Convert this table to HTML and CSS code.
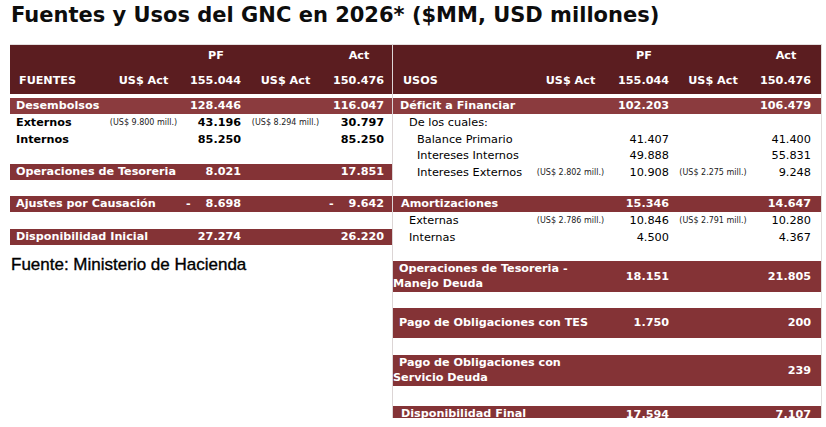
FILE: index.html
```html
<!DOCTYPE html>
<html lang="es">
<head>
<meta charset="utf-8">
<title>Fuentes y Usos del GNC en 2026</title>
<link rel="stylesheet" href="styles.css">
</head>
<body>
<h1 class="title">Fuentes y Usos del GNC en 2026* ($MM, USD millones)</h1>
<div class="tables">
  <div class="left">
    <div class="tbl tbl-l">
      <div class="head">
        <div class="row h22">
          <span></span><span></span><span class="hv"><span class="hc">PF</span></span><span></span><span class="hv"><span class="hc">Act</span></span>
        </div>
        <div class="row h27">
          <span class="pl3">FUENTES</span><span class="c">US$ Act</span><span class="r">155.044</span><span class="c">US$ Act</span><span class="r">150.476</span>
        </div>
      </div>
      <div class="gap4"></div>
      <div class="row bar hi">
        <span class="span2">Desembolsos</span><span class="r">128.446</span><span></span><span class="r">116.047</span>
      </div>
      <div class="row b h175">
        <span>Externos</span><span class="sm">(US$ 9.800 mill.)</span><span class="r">43.196</span><span class="sm">(US$ 8.294 mill.)</span><span class="r">30.797</span>
      </div>
      <div class="row b h17">
        <span>Internos</span><span></span><span class="r">85.250</span><span></span><span class="r">85.250</span>
      </div>
      <div class="sp155"></div>
      <div class="row bar">
        <span class="span2">Operaciones de Tesoreria</span><span class="r">8.021</span><span></span><span class="r">17.851</span>
      </div>
      <div class="sp16"></div>
      <div class="row bar">
        <span class="span2">Ajustes por Causación</span><span class="neg"><span>-</span><span>8.698</span></span><span></span><span class="neg neg5"><span>-</span><span>9.642</span></span>
      </div>
      <div class="sp17"></div>
      <div class="row bar">
        <span class="span2">Disponibilidad Inicial</span><span class="r">27.274</span><span></span><span class="r">26.220</span>
      </div>
    </div>
    <p class="fuente">Fuente: Ministerio de Hacienda</p>
  </div>
  <div class="divider"></div>
  <div class="right">
    <div class="tbl tbl-r">
      <div class="head">
        <div class="row h22">
          <span></span><span></span><span class="hv"><span class="hc">PF</span></span><span></span><span class="hv"><span class="hc">Act</span></span>
        </div>
        <div class="row h27">
          <span class="pl10">USOS</span><span class="c">US$ Act</span><span class="r">155.044</span><span class="c">US$ Act</span><span class="r">150.476</span>
        </div>
      </div>
      <div class="gap4"></div>
      <div class="row bar hi">
        <span class="span2 pl7">Déficit a Financiar</span><span class="r">102.203</span><span></span><span class="r">106.479</span>
      </div>
      <div class="row n h175">
        <span class="span2 pl16">De los cuales:</span><span></span><span></span><span></span>
      </div>
      <div class="row n h165">
        <span class="span2 pl24">Balance Primario</span><span class="r">41.407</span><span></span><span class="r">41.400</span>
      </div>
      <div class="row n h165">
        <span class="span2 pl24">Intereses Internos</span><span class="r">49.888</span><span></span><span class="r">55.831</span>
      </div>
      <div class="row n h16">
        <span class="pl24">Intereses Externos</span><span class="sm">(US$ 2.802 mill.)</span><span class="r">10.908</span><span class="sm">(US$ 2.275 mill.)</span><span class="r">9.248</span>
      </div>
      <div class="sp155"></div>
      <div class="row bar">
        <span class="span2 pl8">Amortizaciones</span><span class="r">15.346</span><span></span><span class="r">14.647</span>
      </div>
      <div class="row n h175">
        <span class="pl16">Externas</span><span class="sm">(US$ 2.786 mill.)</span><span class="r">10.846</span><span class="sm">(US$ 2.791 mill.)</span><span class="r">10.280</span>
      </div>
      <div class="row n h165">
        <span class="span2 pl16">Internas</span><span class="r">4.500</span><span></span><span class="r">4.367</span>
      </div>
      <div class="sp15"></div>
      <div class="row bar bar2">
        <span class="span2 two">Operaciones de Tesoreria -<br>Manejo Deuda</span><span class="r">18.151</span><span></span><span class="r">21.805</span>
      </div>
      <div class="sp16"></div>
      <div class="row bar bar30">
        <span class="span2 pl6">Pago de Obligaciones con TES</span><span class="r">1.750</span><span></span><span class="r">200</span>
      </div>
      <div class="sp17"></div>
      <div class="row bar bar2">
        <span class="span2 two">Pago de Obligaciones con<br>Servicio Deuda</span><span></span><span></span><span class="r">239</span>
      </div>
      <div class="sp20"></div>
      <div class="row bar bar12">
        <span class="span2 pl8">Disponibilidad Final</span><span class="r low">17.594</span><span></span><span class="r low">7.107</span>
      </div>
    </div>
  </div>
</div>
</body>
</html>
```
FILE: styles.css
```css
* { box-sizing: border-box; }

body {
  margin: 0;
  background: #ffffff;
  color: #000000;
  font-family: "DejaVu Sans", Verdana, sans-serif;
}

.title {
  margin: 0;
  height: 44px;
  padding: 2px 0 0 11px;
  font-size: 21px;
  line-height: 26px;
  font-weight: bold;
  color: #0d0d0d;
  white-space: nowrap;
}

.tables {
  display: flex;
  margin-left: 10px;
}

.left { width: 382px; }

.divider {
  width: 1px;
  background: #dcd5d5;
}

.right {
  width: 429px;
  border-right: 1px solid #e1dcdc;
}

.tbl { border-top: 1px solid #e4dfdf; }

.row {
  display: grid;
  align-items: center;
  white-space: nowrap;
  line-height: 14px;
}

.tbl-l .row {
  grid-template-columns: 89px 77px 59px 89px 54px;
  padding: 0 8px 0 6px;
}

.tbl-r .row {
  grid-template-columns: 137px 81px 58px 88px 54px;
  padding: 0 10px 0 0;
}

.head {
  background: #5b1d20;
  color: #ffffff;
  font-weight: bold;
  font-size: 11.2px;
}

.h22 { height: 22px; }
.h27 { height: 27px; }
.h175 { height: 17.5px; padding-top: 1px; }
.h17 { height: 17px; }
.h165 { height: 16.5px; }
.h16 { height: 16px; }

.gap4 { height: 4px; }
.sp15 { height: 15px; }
.sp16 { height: 16px; }
.sp155 { height: 15.5px; }
.sp17 { height: 17px; }
.sp20 { height: 20px; }

.bar {
  background: #843336;
  color: #ffffff;
  font-weight: bold;
  font-size: 11.2px;
  height: 16px;
}

.bar.hi { background: #8b3b3e; }
.bar2 { height: 31px; }
.bar30 { height: 30px; }
.bar12 { height: 12px; line-height: 12px; }

.b { font-weight: bold; font-size: 11.2px; }
.n { font-size: 11.3px; }

.r { text-align: right; }
.c { text-align: center; }
.span2 { grid-column: span 2; }

.hv { text-align: right; }
.hc {
  display: inline-block;
  width: 50px;
  text-align: center;
}

.sm {
  font-size: 8px;
  font-weight: normal;
  text-align: center;
  color: #222222;
}

.neg {
  display: flex;
  justify-content: space-between;
  padding-left: 4px;
}

.neg5 { margin-left: -1px; padding-left: 0; }

.pl3 { padding-left: 3px; }
.pl6 { padding-left: 6px; }
.pl7 { padding-left: 7px; }
.pl8 { padding-left: 8px; }
.pl10 { padding-left: 10px; }
.pl16 { padding-left: 16px; }
.pl24 { padding-left: 24px; }

.two {
  text-indent: 6px;
  line-height: 14.5px;
  white-space: normal;
}

.low { padding-top: 3px; }

.fuente {
  margin: 10px 0 0 1px;
  font-family: "Liberation Sans", Arial, sans-serif;
  font-size: 17px;
  line-height: 20px;
  color: #000000;
  -webkit-text-stroke: 0.35px #000000;
}
```
